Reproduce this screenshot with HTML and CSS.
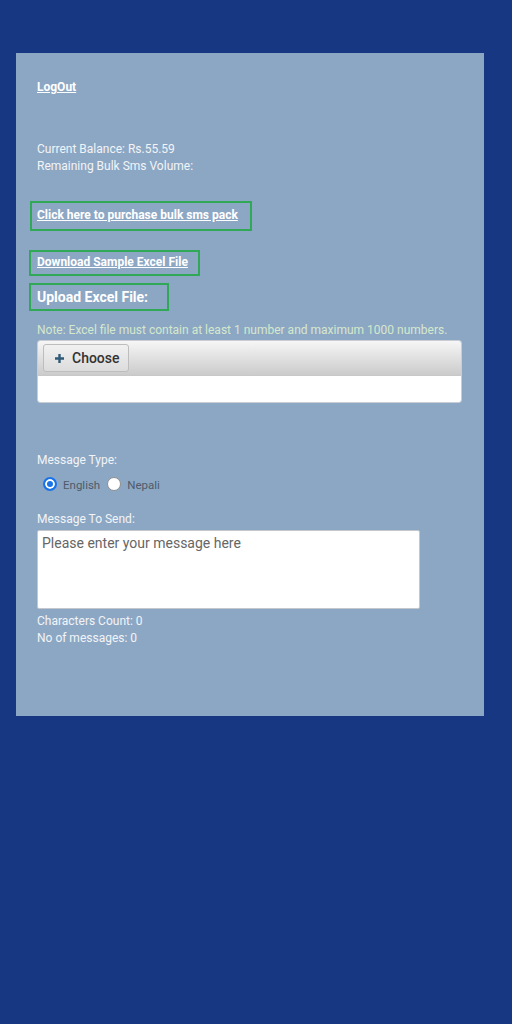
FILE: index.html
```html
<!DOCTYPE html>
<html>
<head>
<meta charset="utf-8">
<link rel="stylesheet" href="styles.css">
</head>
<body>
<div class="panel">
  <a class="logout" href="#">LogOut</a>
  <div class="balance">
    <div>Current Balance: Rs.55.59</div>
    <div>Remaining Bulk Sms Volume:</div>
  </div>
  <div class="boxrow purchase"><a class="box box1" href="#">Click here to purchase bulk sms pack</a></div>
  <div class="boxrow download"><a class="box box2" href="#">Download Sample Excel File</a></div>
  <div class="boxrow upload"><span class="box box3">Upload Excel File:</span></div>
  <div class="note">Note: Excel file must contain at least 1 number and maximum 1000 numbers.</div>
  <div class="chooser">
    <div class="chooser-head">
      <span class="choose-btn"><svg class="plus" width="9" height="9" viewBox="0 0 9 9"><path d="M3.3 0h2.4v3.3H9v2.4H5.7V9H3.3V5.7H0V3.3h3.3z" fill="#2f5a78"/></svg>Choose</span>
    </div>
    <div class="chooser-body"></div>
  </div>
  <div class="label mtype">Message Type:</div>
  <div class="radios">
    <span class="radio checked"></span><span class="rlabel">English</span>
    <span class="radio"></span><span class="rlabel">Nepali</span>
  </div>
  <div class="label msend">Message To Send:</div>
  <div class="textarea">Please enter your message here</div>
  <div class="counts">
    <div>Characters Count: 0</div>
    <div>No of messages: 0</div>
  </div>
</div>
</body>
</html>
```

FILE: styles.css
```css
html, body {
  margin: 0;
  padding: 0;
  background: #183783;
  font-family: Roboto, "Noto Sans", sans-serif;
}
body {
  height: 1024px;
  overflow: hidden;
}
.panel {
  margin: 53px 0 0 16px;
  width: 468px;
  height: 663px;
  box-sizing: border-box;
  background: #8ca7c4;
  padding: 26px 21px 0 21px;
  color: #f2f4f7;
  font-size: 12px;
  line-height: 17px;
}
a {
  color: #ffffff;
  font-weight: bold;
  text-decoration: underline;
}
.logout {
  display: block;
  width: max-content;
}
.balance {
  margin-top: 45px;
}
.boxrow {
  margin-left: -8px;
}
.box {
  display: inline-block;
  border: 2px solid #2fa955;
}
.purchase { margin-top: 26px; margin-left: -7px; }
.box1 { padding: 4px 12px 5px 5px; }
.download { margin-top: 19px; }
.box2 { padding: 2px 10px 3px 6px; }
.upload { margin-top: 7px; }
.box3 {
  padding: 3px 19px 3px 6px;
  font-weight: bold;
  font-size: 14px;
  line-height: 18px;
  color: #ffffff;
}
.note {
  margin-top: 11px;
  color: #d6e8cc;
}
.chooser {
  margin-top: 1px;
  width: 423px;
  border: 1px solid #c9ced4;
  border-radius: 3px;
  overflow: hidden;
}
.chooser-head {
  height: 35px;
  box-sizing: border-box;
  padding: 3px 5px;
  background: linear-gradient(#f6f6f6, #cbcbcb);
  border-bottom: 1px solid #c8c8c8;
}
.choose-btn {
  display: inline-flex;
  align-items: center;
  box-sizing: border-box;
  height: 28px;
  width: 86px;
  padding-left: 11px;
  border: 1px solid #bdbdbd;
  border-radius: 3px;
  background: linear-gradient(#f1f1f1, #dcdcdc);
  color: #333333;
  font-size: 14px;
  font-weight: 500;
}
.plus { margin-right: 8px; }
.chooser-body {
  height: 26px;
  background: #ffffff;
}
.mtype { margin-top: 49px; }
.radios {
  display: flex;
  align-items: center;
  margin-top: 6px;
  padding-left: 6px;
  height: 17px;
}
.radio {
  width: 12px;
  height: 12px;
  border-radius: 50%;
  background: #ffffff;
  border: 1px solid #8f8f8f;
  margin-right: 6px;
}
.radio.checked {
  border: 2px solid #1a73e8;
  width: 10px;
  height: 10px;
  background: #1a73e8;
  box-shadow: inset 0 0 0 2px #ffffff;
}
.rlabel {
  color: #4f5b6a;
  font-size: 11.5px;
  margin-right: 7px;
  margin-top: 4px;
}
.msend { margin-top: 19px; }
.textarea {
  margin-top: 2px;
  width: 383px;
  height: 79px;
  box-sizing: border-box;
  background: #ffffff;
  border: 1px solid #c4c8cc;
  border-radius: 2px;
  padding: 3px 4px;
  color: #666666;
  font-size: 14px;
  line-height: 18px;
}
.counts { margin-top: 4px; }
```
